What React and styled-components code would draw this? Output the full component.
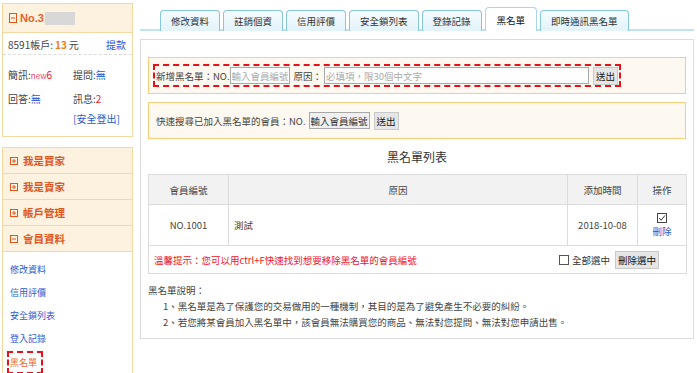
import React from 'react';
import styled, { createGlobalStyle } from 'styled-components';

const Global = createGlobalStyle`
  html, body { margin: 0; padding: 0; background: #fff; }
  body {
    font-family: "Noto Sans CJK TC", "Liberation Sans", sans-serif;
    font-size: 10px;
    color: #444;
    overflow: hidden;
  }
  * { box-sizing: border-box; }
`;

const Page = styled.div`
  display: flex;
  align-items: flex-start;
  gap: 7px;
  padding-left: 2px;
  width: 697px;
  height: 373px;
  overflow: hidden;
`;

const Sidebar = styled.aside`
  width: 131px;
  flex: none;
  margin-top: 3px;
  display: flex;
  flex-direction: column;
  gap: 10px;
`;

const Panel = styled.div`
  border: 1px solid #f4d9a3;
  background: #fff;
`;

const PanelHead = styled.div`
  height: 29px;
  background: #fdf2e0;
  border-bottom: 1px solid #f4d9a3;
  display: flex;
  align-items: center;
  gap: 3px;
  padding-left: 6px;
  color: #e8602c;
  font-weight: bold;
  font-size: 11px;
  font-family: "Liberation Sans", "Noto Sans CJK TC", sans-serif;
`;

const Masked = styled.span`
  display: inline-block;
  width: 30px;
  height: 13px;
  background: #d8d8d8;
  margin-left: -2px;
`;

const AccountRow = styled.div`
  height: 22px;
  padding: 2px 6px 0 5px;
  display: flex;
  align-items: center;
  justify-content: space-between;
  border-bottom: 1px dashed #dcdcdc;
  color: #444;
`;

const Amount = styled.b`
  color: #f07d1a;
  margin: 0 2px;
`;

const Link = styled.a`
  color: ${p => (p.$active ? '#f06a1f' : '#2a5ad4')};
  text-decoration: none;
  cursor: pointer;
`;

const StatGrid = styled.div`
  display: grid;
  grid-template-columns: 65px 1fr;
  grid-auto-rows: 24px;
  align-items: center;
  padding: 7px 5px 0 5px;
`;

const Stat = styled.span`
  color: #444;
`;

const Val = styled.span`
  color: ${p => p.$color || '#2a5ad4'};
  font-size: ${p => (p.$small ? '8px' : '10px')};
`;

const LogoutRow = styled.div`
  height: 16px;
  margin-bottom: 10px;
  display: flex;
  justify-content: flex-end;
  align-items: center;
  padding-right: 12px;
`;

const MenuHead = styled.div`
  height: 26px;
  background: #fdf2e0;
  border-bottom: 1px solid #f4d9a3;
  display: flex;
  align-items: center;
  gap: 5px;
  padding-left: 7px;
  color: #e0561e;
  font-weight: bold;
  font-size: 10.5px;
`;

const MenuList = styled.div`
  display: flex;
  flex-direction: column;
  align-items: flex-start;
  padding: 6px 0 30px 7px;
  font-size: 9px;
`;

const MenuLink = styled(Link)`
  display: inline-block;
  height: 23px;
  line-height: 23px;
  ${p =>
    p.$active &&
    `border: 2px dashed #e8101a; padding: 0 4px 0 1px; margin-left: -3px; line-height: 19px; margin-top: 1px;`}
`;

const Main = styled.main`
  width: 554px;
  flex: none;
  font-size: 9.5px;
`;

const TabBar = styled.div`
  height: 31px;
  display: flex;
  align-items: flex-end;
  gap: 3px;
  padding-left: 20px;
  border-bottom: 2px solid #bfe3f0;
`;

const Tab = styled.div`
  height: ${p => (p.$active ? '24px' : '21px')};
  margin-bottom: -2px;
  padding: 0 ${p => (p.$active ? '11px' : '10px')};
  border: 1px solid ${p => (p.$active ? '#a9d6e8' : '#86c6df')};
  border-bottom: none;
  border-radius: 4px 4px 0 0;
  background: ${p => (p.$active ? '#fff' : 'linear-gradient(#f5fcff, #e2f3fa)')};
  color: ${p => (p.$active ? '#111' : '#333')};
  font-size: 9.5px;
  display: flex;
  align-items: center;
  white-space: nowrap;
`;

const ContentBox = styled.section`
  margin-top: 8px;
  border: 1px solid #dcdcdc;
  padding: 17px 7px 8px 7px;
`;

const NoticeBox = styled.div`
  height: 37px;
  margin-top: ${p => p.$mt || '0'};
  border: 1px solid #fbcd7b;
  background: #fdf8f0;
  display: flex;
  align-items: center;
  padding: 0 ${p => p.$pl || '4px'};
`;

const DashedForm = styled.div`
  width: 468px;
  height: 23px;
  border: 2px dashed #e8101a;
  display: flex;
  align-items: center;
  padding-left: 1px;
  color: #444;
  white-space: nowrap;
`;

const Label = styled.span`
  white-space: nowrap;
  flex: none;
  margin-right: ${p => p.$mr || '0'};
`;

const TextInput = styled.input`
  flex: none;
  width: ${p => p.$w};
  height: 17px;
  border: 1px solid #a8a8a8;
  background: ${p => p.$bg || '#fff'};
  font-family: inherit;
  font-size: 9.5px;
  color: #333;
  padding: 0 1px;
  margin: 0 4px 0 0;
  outline: none;
  &::placeholder { color: #aaa; }
`;

const Button = styled.button`
  flex: none;
  white-space: nowrap;
  height: 18px;
  padding: 0 2px;
  border: 1px solid #c9c9c9;
  background: #e6e6e6;
  font-family: inherit;
  font-size: 9.5px;
  color: #111;
  line-height: 14px;
  cursor: pointer;
`;

const Title = styled.h3`
  margin: 0;
  height: 35px;
  line-height: 35px;
  text-align: center;
  font-size: 12px;
  font-weight: normal;
  color: #333;
`;

const Table = styled.table`
  width: 538px;
  border-collapse: collapse;
  table-layout: fixed;
  border: 1px solid #dcdcdc;
`;

const Th = styled.th`
  height: 30px;
  background: #f2f2f2;
  border: 1px solid #dcdcdc;
  font-weight: normal;
  color: #444;
  font-size: 9.5px;
  width: ${p => p.$w};
`;

const Td = styled.td`
  height: ${p => p.$h || '41px'};
  border: 1px solid #dcdcdc;
  text-align: ${p => p.$align || 'center'};
  padding: 0 ${p => p.$px || '5px'};
  color: #444;
  vertical-align: middle;
`;

const OpCell = styled.div`
  display: flex;
  flex-direction: column;
  align-items: center;
  gap: 1px;
`;

const FooterCell = styled.div`
  display: flex;
  align-items: center;
  justify-content: space-between;
  padding-right: 22px;
`;

const Warn = styled.span`
  color: #f0141e;
`;

const SelectAll = styled.label`
  display: flex;
  align-items: center;
  gap: 2px;
  color: #333;
`;

const Box = styled.span`
  display: inline-block;
  width: 10px;
  height: 10px;
  border: 1px solid #555;
  background: #fff;
  margin-right: 1px;
`;

const Actions = styled.div`
  display: flex;
  align-items: center;
  gap: 5px;
`;

const Notes = styled.div`
  margin-top: 8px;
  line-height: 16px;
  color: #444;
`;

const NoteItem = styled.div`
  padding-left: 15px;
`;

const PlusBox = ({ minus, h = 8 }) => (
  <svg width="8" height={h} viewBox={`0 0 8 ${h}`} style={{ flex: 'none' }}>
    <rect x="0.5" y="0.5" width="7" height={h - 1} fill="none" stroke="#e0561e" strokeWidth="1" />
    <line x1="2" y1={h / 2} x2="6" y2={h / 2} stroke="#e0561e" strokeWidth="1" />
    {!minus && <line x1="4" y1="2" x2="4" y2={h - 2} stroke="#e0561e" strokeWidth="1" />}
  </svg>
);

const CheckIcon = () => (
  <svg width="10" height="10" viewBox="0 0 10 10">
    <rect x="0.5" y="0.5" width="9" height="9" fill="#fff" stroke="#444" />
    <path d="M2.2 5 L4.2 7.2 L8 2.4" fill="none" stroke="#333" strokeWidth="1" />
  </svg>
);

const tabs = ['修改資料', '註銷個資', '信用評價', '安全鎖列表', '登錄記錄', '黑名單', '即時通訊黑名單'];
const menus = ['我是買家', '我是賣家', '帳戶管理'];
const links = ['修改資料', '信用評價', '安全鎖列表', '登入記錄', '黑名單'];

export default function App() {
  return (
    <>
      <Global />
      <Page>
        <Sidebar>
          <Panel>
            <PanelHead>
              <PlusBox minus h={10} />
              <span>No.3</span>
              <Masked />
            </PanelHead>
            <AccountRow>
              <span>
                8591帳戶:<Amount>13</Amount>元
              </span>
              <Link>提款</Link>
            </AccountRow>
            <StatGrid>
              <Stat>
                簡訊:<Val $color="#f0446a" $small>new</Val><Val $color="#f0141e">6</Val>
              </Stat>
              <Stat>
                提問:<Val>無</Val>
              </Stat>
              <Stat>
                回答:<Val>無</Val>
              </Stat>
              <Stat>
                訊息:<Val $color="#f0141e">2</Val>
              </Stat>
            </StatGrid>
            <LogoutRow>
              <Link>[安全登出]</Link>
            </LogoutRow>
          </Panel>
          <Panel>
            {menus.map(m => (
              <MenuHead key={m}>
                <PlusBox />
                {m}
              </MenuHead>
            ))}
            <MenuHead>
              <PlusBox minus />
              會員資料
            </MenuHead>
            <MenuList>
              {links.map((l, i) => (
                <MenuLink key={l} $active={i === links.length - 1}>
                  {l}
                </MenuLink>
              ))}
            </MenuList>
          </Panel>
        </Sidebar>
        <Main>
          <TabBar>
            {tabs.map(t => (
              <Tab key={t} $active={t === '黑名單'}>
                {t}
              </Tab>
            ))}
          </TabBar>
          <ContentBox>
            <NoticeBox>
              <DashedForm>
                <Label>新增黑名單：NO.</Label>
                <TextInput $w="60px" placeholder="輸入會員編號" />
                <Label $mr="2px">原因：</Label>
                <TextInput $w="265px" placeholder="必填項，限30個中文字" />
                <Button>送出</Button>
              </DashedForm>
            </NoticeBox>
            <NoticeBox $mt="8px" $pl="7px">
              <Label $mr="3px">快速搜尋已加入黑名單的會員：NO.</Label>
              <TextInput $w="61px" $bg="#f0f0f0" defaultValue="輸入會員編號" readOnly />
              <Button>送出</Button>
            </NoticeBox>
            <Title>黑名單列表</Title>
            <Table>
              <thead>
                <tr>
                  <Th $w="80px">會員編號</Th>
                  <Th $w="339px">原因</Th>
                  <Th $w="70px">添加時間</Th>
                  <Th $w="49px">操作</Th>
                </tr>
              </thead>
              <tbody>
                <tr>
                  <Td>NO.1001</Td>
                  <Td $align="left">測試</Td>
                  <Td>2018-10-08</Td>
                  <Td>
                    <OpCell>
                      <CheckIcon />
                      <Link>刪除</Link>
                    </OpCell>
                  </Td>
                </tr>
                <tr>
                  <Td colSpan={4} $h="28px" $align="left">
                    <FooterCell>
                      <Warn>溫馨提示：您可以用ctrl+F快速找到想要移除黑名單的會員編號</Warn>
                      <Actions>
                        <SelectAll>
                          <Box />
                          全部選中
                        </SelectAll>
                        <Button>刪除選中</Button>
                      </Actions>
                    </FooterCell>
                  </Td>
                </tr>
              </tbody>
            </Table>
            <Notes>
              <div>黑名單說明：</div>
              <NoteItem>1、黑名單是為了保護您的交易做用的一種機制，其目的是為了避免產生不必要的糾紛。</NoteItem>
              <NoteItem>2、若您將某會員加入黑名單中，該會員無法購買您的商品、無法對您提問、無法對您申請出售。</NoteItem>
            </Notes>
          </ContentBox>
        </Main>
      </Page>
    </>
  );
}
